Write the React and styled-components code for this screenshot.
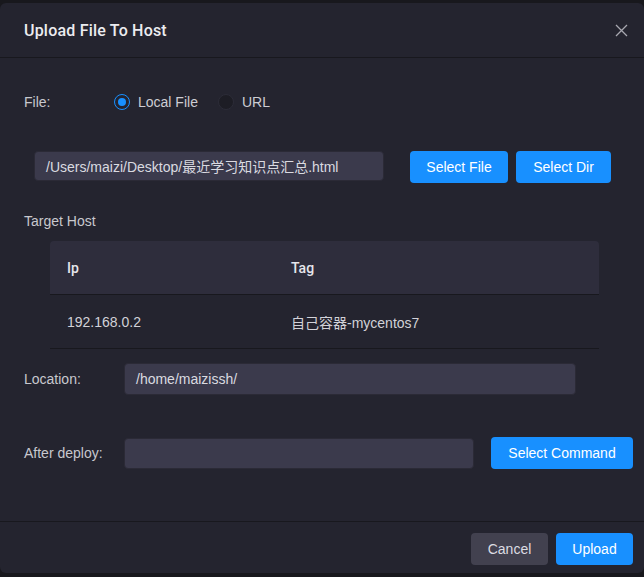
import React from 'react';
import styled, { createGlobalStyle } from 'styled-components';

const GlobalStyle = createGlobalStyle`
  html, body {
    margin: 0;
    padding: 0;
    background: #18181d;
    font-family: "Liberation Sans", Arial, "Noto Sans CJK SC", sans-serif;
    -webkit-font-smoothing: antialiased;
  }
`;

const Page = styled.div`
  width: 644px;
  height: 577px;
  padding-top: 3px;
  box-sizing: border-box;
  background: #18181d;
`;

const Modal = styled.div`
  display: flex;
  flex-direction: column;
  width: 644px;
  height: 570px;
  background: #24242f;
  border-radius: 6px;
  overflow: hidden;
`;

const Header = styled.div`
  display: flex;
  align-items: center;
  justify-content: space-between;
  height: 54px;
  padding: 0 16px 0 24px;
  border-bottom: 1px solid #18181e;
`;

const Title = styled.h2`
  margin: 0;
  font-family: Roboto, "Liberation Sans", sans-serif;
  font-size: 16px;
  font-weight: 500;
  letter-spacing: 0.2px;
  color: #ececf0;
`;

const Close = styled.button`
  width: 14px;
  height: 14px;
  padding: 0;
  border: 0;
  background: none;
  display: flex;
  align-items: center;
  justify-content: center;
`;

const Body = styled.div`
  flex: 1;
  padding: 33px 24px 0 24px;
`;

const Row = styled.div`
  display: flex;
  align-items: ${p => p.top ? 'flex-start' : 'center'};
  margin-top: ${p => p.mt || 0}px;
  margin-left: ${p => p.ml || 0}px;
`;

const Label = styled.span`
  width: ${p => p.w}px;
  flex-shrink: 0;
  font-size: 14px;
  line-height: 22px;
  color: #c8c8ce;
`;

const RadioItem = styled.label`
  display: flex;
  align-items: center;
  gap: 8px;
  margin-right: 20px;
  font-size: 14px;
  line-height: 22px;
  color: #cdcdd3;
`;

const RadioDot = styled.span`
  width: 16px;
  height: 16px;
  box-sizing: border-box;
  border-radius: 50%;
  border: 1px solid ${p => p.checked ? '#1890ff' : '#2c2c38'};
  background: ${p => p.checked ? 'transparent' : '#1d1d25'};
  display: flex;
  align-items: center;
  justify-content: center;
  &::after {
    content: '';
    display: ${p => p.checked ? 'block' : 'none'};
    width: 8px;
    height: 8px;
    border-radius: 50%;
    background: #1890ff;
  }
`;

const Input = styled.div`
  width: ${p => p.w}px;
  height: ${p => p.h || 31}px;
  box-sizing: border-box;
  flex-shrink: 0;
  padding: 0 11px;
  display: flex;
  align-items: center;
  background: #3b3a4c;
  border: 1px solid #2b2a36;
  border-radius: 4px;
  font-size: 14px;
  color: #dadae0;
  white-space: nowrap;
`;

const Button = styled.button`
  height: 32px;
  width: ${p => p.w}px;
  margin-left: ${p => p.ml || 0}px;
  padding: 0;
  border: 0;
  border-radius: 4px;
  background: ${p => p.secondary ? '#42414f' : '#1890ff'};
  color: ${p => p.secondary ? '#dcdce2' : '#ffffff'};
  font-family: inherit;
  font-size: 14px;
  flex-shrink: 0;
`;

const Section = styled.div`
  margin-top: 27px;
  font-size: 14px;
  line-height: 22px;
  color: #c8c8ce;
`;

const Table = styled.div`
  margin: 9px 0 0 26px;
  width: 549px;
`;

const TableRow = styled.div`
  display: grid;
  grid-template-columns: 224px 1fr;
  height: 53px;
  align-items: center;
  padding-left: 17px;
  background: ${p => p.head ? '#2e2d3c' : 'transparent'};
  border-radius: ${p => p.head ? '4px 4px 0 0' : '0'};
  border-bottom: 1px solid #18181e;
  font-family: ${p => p.head ? 'Roboto, "Liberation Sans", sans-serif' : 'inherit'};
  font-size: 14px;
  color: ${p => p.head ? '#e6e6ec' : '#d2d2d8'};
  font-weight: ${p => p.head ? 500 : 400};
`;

const Footer = styled.div`
  height: 52px;
  display: flex;
  justify-content: flex-end;
  align-items: flex-start;
  gap: 8px;
  padding: 11px 11px 0 0;
  box-sizing: border-box;
  border-top: 1px solid #18181e;
`;

export default function App() {
  return (
    <Page>
      <GlobalStyle />
      <Modal>
        <Header>
          <Title>Upload File To Host</Title>
          <Close>
            <svg width="13" height="13" viewBox="0 0 13 13">
              <path d="M1 1L12 12M12 1L1 12" stroke="#a8a8b0" strokeWidth="1.3" />
            </svg>
          </Close>
        </Header>
        <Body>
          <Row>
            <Label w={90}>File:</Label>
            <RadioItem><RadioDot checked />Local File</RadioItem>
            <RadioItem><RadioDot />URL</RadioItem>
          </Row>
          <Row top mt={38} ml={10}>
            <Input w={350} h={30}>/Users/maizi/Desktop/最近学习知识点汇总.html</Input>
            <Button w={98} ml={26}>Select File</Button>
            <Button w={95} ml={8}>Select Dir</Button>
          </Row>
          <Section>Target Host</Section>
          <Table>
            <TableRow head><span>Ip</span><span>Tag</span></TableRow>
            <TableRow><span>192.168.0.2</span><span>自己容器-mycentos7</span></TableRow>
          </Table>
          <Row mt={14}>
            <Label w={100}>Location:</Label>
            <Input w={452} h={32}>/home/maizissh/</Input>
          </Row>
          <Row mt={42}>
            <Label w={100}>After deploy:</Label>
            <Input w={350} h={31} />
            <Button w={142} ml={17}>Select Command</Button>
          </Row>
        </Body>
        <Footer>
          <Button secondary w={77}>Cancel</Button>
          <Button w={77}>Upload</Button>
        </Footer>
      </Modal>
    </Page>
  );
}
